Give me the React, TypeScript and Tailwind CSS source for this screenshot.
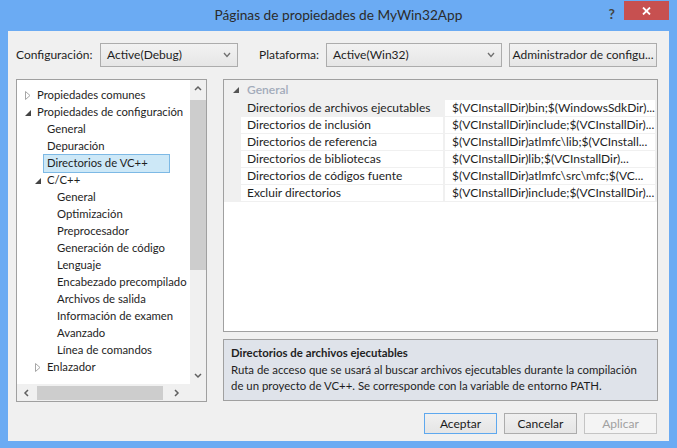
import React from 'react';

type TreeItem = {
  label: string;
  level: number;
  toggle?: 'open' | 'closed';
  selected?: boolean;
};

const treeItems: TreeItem[] = [
  { label: 'Propiedades comunes', level: 0, toggle: 'closed' },
  { label: 'Propiedades de configuración', level: 0, toggle: 'open' },
  { label: 'General', level: 1 },
  { label: 'Depuración', level: 1 },
  { label: 'Directorios de VC++', level: 1, selected: true },
  { label: 'C/C++', level: 1, toggle: 'open' },
  { label: 'General', level: 2 },
  { label: 'Optimización', level: 2 },
  { label: 'Preprocesador', level: 2 },
  { label: 'Generación de código', level: 2 },
  { label: 'Lenguaje', level: 2 },
  { label: 'Encabezado precompilado', level: 2 },
  { label: 'Archivos de salida', level: 2 },
  { label: 'Información de examen', level: 2 },
  { label: 'Avanzado', level: 2 },
  { label: 'Línea de comandos', level: 2 },
  { label: 'Enlazador', level: 1, toggle: 'closed' },
];

const properties = [
  ['Directorios de archivos ejecutables', '$(VCInstallDir)bin;$(WindowsSdkDir)...'],
  ['Directorios de inclusión', '$(VCInstallDir)include;$(VCInstallDir)...'],
  ['Directorios de referencia', '$(VCInstallDir)atlmfc\\lib;$(VCInstall...'],
  ['Directorios de bibliotecas', '$(VCInstallDir)lib;$(VCInstallDir)...'],
  ['Directorios de códigos fuente', '$(VCInstallDir)atlmfc\\src\\mfc;$(VC...'],
  ['Excluir directorios', '$(VCInstallDir)include;$(VCInstallDir)...'],
];

function Collapsed() {
  return (
    <svg width="6" height="9" viewBox="0 0 6 9" className="shrink-0">
      <path d="M0.5 0.5 L5 4.5 L0.5 8.5 Z" fill="none" stroke="#a6a6a6" strokeWidth="1" />
    </svg>
  );
}

function Expanded({ color = '#444' }: { color?: string }) {
  return (
    <svg width="6" height="6" viewBox="0 0 6 6" className="shrink-0">
      <path d="M6 0 L6 6 L0 6 Z" fill={color} />
    </svg>
  );
}

function Chevron({ dir }: { dir: 'up' | 'down' | 'left' | 'right' }) {
  const d = {
    up: 'M1 5 L4 2 L7 5',
    down: 'M1 2 L4 5 L7 2',
    left: 'M5 1 L2 4 L5 7',
    right: 'M2 1 L5 4 L2 7',
  }[dir];
  return (
    <svg width="8" height="8" viewBox="0 0 8 8">
      <path d={d} fill="none" stroke="#606060" strokeWidth="1.5" />
    </svg>
  );
}

function ComboBox({ value, width }: { value: string; width: string }) {
  return (
    <div className={`${width} h-[24px] flex items-center justify-between border border-[#acacac] bg-gradient-to-b from-[#f2f2f2] to-[#e6e6e6] pl-[6px] pr-[6px]`}>
      <span>{value}</span>
      <svg width="8" height="6" viewBox="0 0 8 6">
        <path d="M1 1 L4 4.5 L7 1" fill="none" stroke="#707070" strokeWidth="1.3" />
      </svg>
    </div>
  );
}

function Button({ label, primary, disabled }: { label: string; primary?: boolean; disabled?: boolean }) {
  return (
    <div
      className={`w-[73px] h-[21px] flex items-center justify-center border ${
        primary
          ? 'border-[#5ea8ee] bg-gradient-to-b from-[#f0f0f0] to-[#e5e5e5] text-[#1a1a1a]'
          : disabled
          ? 'border-[#c4c4c4] bg-[#f4f4f4] text-[#a0a0a0]'
          : 'border-[#acacac] bg-gradient-to-b from-[#f0f0f0] to-[#e5e5e5] text-[#1a1a1a]'
      }`}
    >
      {label}
    </div>
  );
}

export default function App() {
  return (
    <div className="w-[677px] h-[448px] bg-[#6babf3] flex flex-col font-['Lato',sans-serif] text-[12px] text-[#1e1e1e] overflow-hidden">
      {/* Title bar */}
      <div className="h-[31px] flex items-start relative">
        <div className="flex-1 h-full flex items-center justify-center text-[13.7px] text-[#2b2b2b]">
          Páginas de propiedades de MyWin32App
        </div>
        <div className="absolute right-[62px] top-[3px] text-[14px] font-bold text-[#444]">?</div>
        <div className="absolute right-[8px] top-[1px] w-[45px] h-[19px] bg-[#c75050] flex items-center justify-center">
          <svg width="9" height="8" viewBox="0 0 9 8">
            <path d="M1 0.5 L8 7.5 M8 0.5 L1 7.5" stroke="#fff" strokeWidth="1.8" />
          </svg>
        </div>
      </div>

      {/* Client area */}
      <div className="mx-[8px] h-[410px] bg-[#f0f0f0] flex flex-col pl-[8px] pr-[12px]">
        {/* Top row */}
        <div className="mt-[12px] h-[24px] flex items-center">
          <span className="w-[84px]">Configuración:</span>
          <ComboBox value="Active(Debug)" width="w-[138px]" />
          <span className="ml-[21px] w-[67px]">Plataforma:</span>
          <ComboBox value="Active(Win32)" width="w-[176px]" />
          <div className="ml-[7px] flex-1 h-[24px] flex items-center justify-center border border-[#acacac] bg-gradient-to-b from-[#f2f2f2] to-[#e6e6e6]">
            Administrador de configu...
          </div>
        </div>

        {/* Main */}
        <div className="mt-[12px] flex gap-[16px]">
          {/* Tree */}
          <div className="w-[191px] h-[323px] border border-[#a0a0a0] bg-white grid grid-cols-[173px_16px] grid-rows-[304px_17px] text-[11.3px]">
            <div className="pt-[7px] overflow-hidden">
              {treeItems.map((item, i) => (
                <div key={i} className="h-[17px] flex items-center">
                  <div
                    className={`${
                      item.level === 0 ? 'w-[20px] pl-[8px]' : item.level === 1 ? 'w-[30px] pl-[18px]' : 'w-[40px]'
                    } shrink-0 flex items-center`}
                  >
                    {item.toggle === 'closed' && <Collapsed />}
                    {item.toggle === 'open' && <Expanded />}
                  </div>
                  {item.selected ? (
                    <div className="-ml-[4px] w-[127px] h-[19px] pl-[3px] flex items-center bg-[#cde8f7] border border-[#7db9e5] whitespace-nowrap">
                      {item.label}
                    </div>
                  ) : (
                    <span className="whitespace-nowrap">{item.label}</span>
                  )}
                </div>
              ))}
            </div>
            <div className="bg-[#f0f0f0] flex flex-col items-center">
              <div className="h-[17px] flex items-center justify-center">
                <Chevron dir="up" />
              </div>
              <div className="mt-[3px] w-[16px] h-[170px] bg-[#cdcdcd]" />
              <div className="flex-1" />
              <div className="h-[17px] flex items-center justify-center">
                <Chevron dir="down" />
              </div>
            </div>
            <div className="bg-[#f0f0f0] flex items-center">
              <div className="w-[20px] flex justify-center">
                <Chevron dir="left" />
              </div>
              <div className="w-[126px] h-[14px] bg-[#cdcdcd]" />
              <div className="flex-1 flex justify-center">
                <Chevron dir="right" />
              </div>
            </div>
            <div className="bg-[#f0f0f0]" />
          </div>

          {/* Right column */}
          <div className="flex-1 flex flex-col gap-[7px]">
            <div className="h-[253px] border border-[#a0a0a0] bg-white">
              <div className="bg-[#f0f0f0] pb-[1px]">
                <div className="h-[20px] flex items-center pl-[9px] gap-[8px]">
                  <Expanded color="#555" />
                  <span className="font-semibold text-[#a2abba]">General</span>
                </div>
                <div className="flex flex-col gap-[1px]">
                  {properties.map(([name, value], i) => (
                    <div key={i} className="h-[16px] flex pl-[17px] pr-[2px] gap-[2px]">
                      <div className={`w-[202px] pl-[6px] flex items-center whitespace-nowrap ${i === 0 ? 'bg-[#f0f0f0]' : 'bg-white'}`}>
                        {name}
                      </div>
                      <div className="flex-1 pl-[7px] flex items-center bg-white whitespace-nowrap overflow-hidden">
                        {value}
                      </div>
                    </div>
                  ))}
                </div>
              </div>
            </div>
            <div className="h-[62px] border border-[#a0a0a0] bg-[#dfe3ea] px-[7px] pt-[5px] leading-[16px] text-[11.4px]">
              <div className="font-bold">Directorios de archivos ejecutables</div>
              <div className="mt-[1px]">
                Ruta de acceso que se usará al buscar archivos ejecutables durante la compilación de un proyecto de VC++. Se corresponde con la variable de entorno PATH.
              </div>
            </div>
          </div>
        </div>

        {/* Buttons */}
        <div className="mt-[11px] flex justify-end gap-[7px]">
          <Button label="Aceptar" primary />
          <Button label="Cancelar" />
          <Button label="Aplicar" disabled />
        </div>
      </div>
    </div>
  );
}
